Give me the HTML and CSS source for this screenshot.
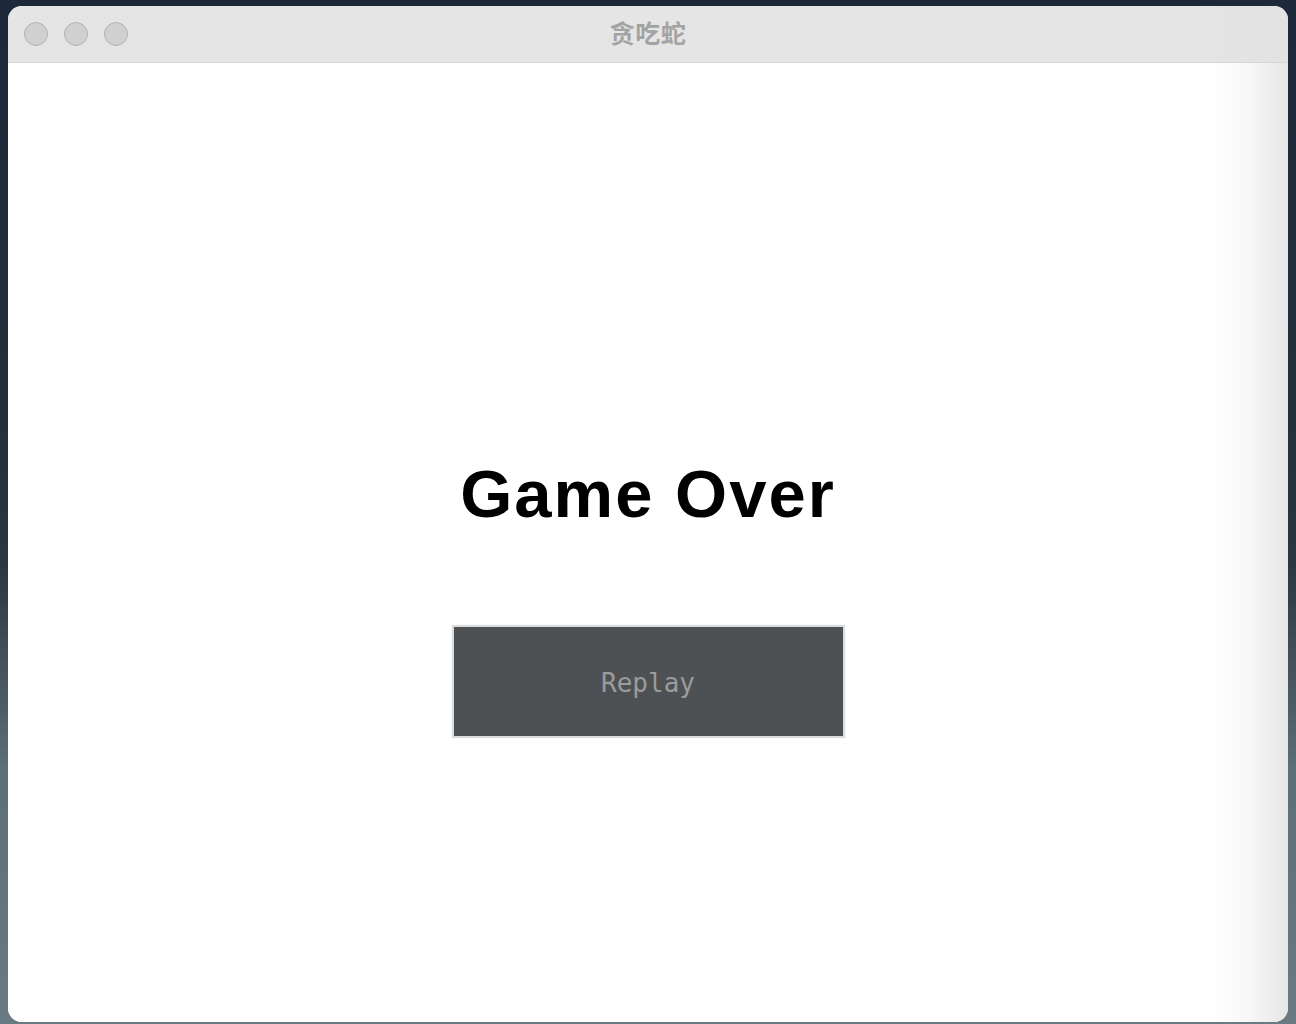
FILE: index.html
```html
<!DOCTYPE html>
<html lang="zh">
<head>
<meta charset="utf-8">
<title>贪吃蛇</title>
<link rel="stylesheet" href="styles.css">
</head>
<body>
<div class="desktop">
  <div class="window">
    <div class="titlebar">
      <div class="lights">
        <span class="light"></span>
        <span class="light"></span>
        <span class="light"></span>
      </div>
      <div class="title">贪吃蛇</div>
    </div>
    <div class="content">
      <h1 class="gameover">Game Over</h1>
      <button class="replay">Replay</button>
    </div>
  </div>
</div>
</body>
</html>
```
FILE: styles.css
```css
html, body {
  margin: 0;
  padding: 0;
  width: 1296px;
  height: 1024px;
  overflow: hidden;
}
.desktop {
  box-sizing: border-box;
  width: 1296px;
  height: 1024px;
  padding: 6px 8px 2px 8px;
  background: linear-gradient(180deg, #1d2838 0%, #22303c 40%, #2a3640 55%, #5c6e78 75%, #6a7a82 100%);
}
.window {
  height: 1016px;
  border-radius: 14px;
  overflow: hidden;
  background: #fff;
  display: flex;
  flex-direction: column;
}
.titlebar {
  height: 57px;
  flex: 0 0 57px;
  box-sizing: border-box;
  background: linear-gradient(90deg, #e5e5e5 0%, #e5e5e5 92%, #e2e2e2 100%);
  border-bottom: 1px solid #d6d6d6;
  position: relative;
  display: flex;
  align-items: center;
  justify-content: center;
}
.lights {
  position: absolute;
  left: 16px;
  top: 16px;
  display: flex;
  gap: 16px;
}
.light {
  width: 22px;
  height: 22px;
  border-radius: 50%;
  background: #d0d0d0;
  border: 1px solid #b3b3b3;
}
.title {
  font-family: "Noto Sans CJK SC", "Liberation Sans", sans-serif;
  font-weight: 700;
  font-size: 25px;
  line-height: 30px;
  color: #a3a3a3;
  letter-spacing: 0.5px;
  margin-top: -5px;
}
.content {
  flex: 1;
  display: flex;
  flex-direction: column;
  align-items: center;
  background: linear-gradient(90deg, #ffffff 0%, #ffffff 94.2%, #f7f7f7 97%, #e6e6e6 100%);
}
.gameover {
  margin: 391px 0 0 0;
  font-family: "Liberation Sans", Arial, sans-serif;
  font-weight: 700;
  font-size: 67px;
  line-height: 80px;
  letter-spacing: 2px;
  color: #000;
}
.replay {
  margin-top: 91px;
  width: 393px;
  height: 113px;
  box-sizing: border-box;
  background: #4e5154;
  border: 2px solid #dcdcdc;
  box-shadow: 0 0 2px #eeeeee;
  color: #9b9b9b;
  font-family: "DejaVu Sans Mono", "Liberation Mono", monospace;
  font-size: 26px;
  padding: 2px 0 0 0;
}
```
